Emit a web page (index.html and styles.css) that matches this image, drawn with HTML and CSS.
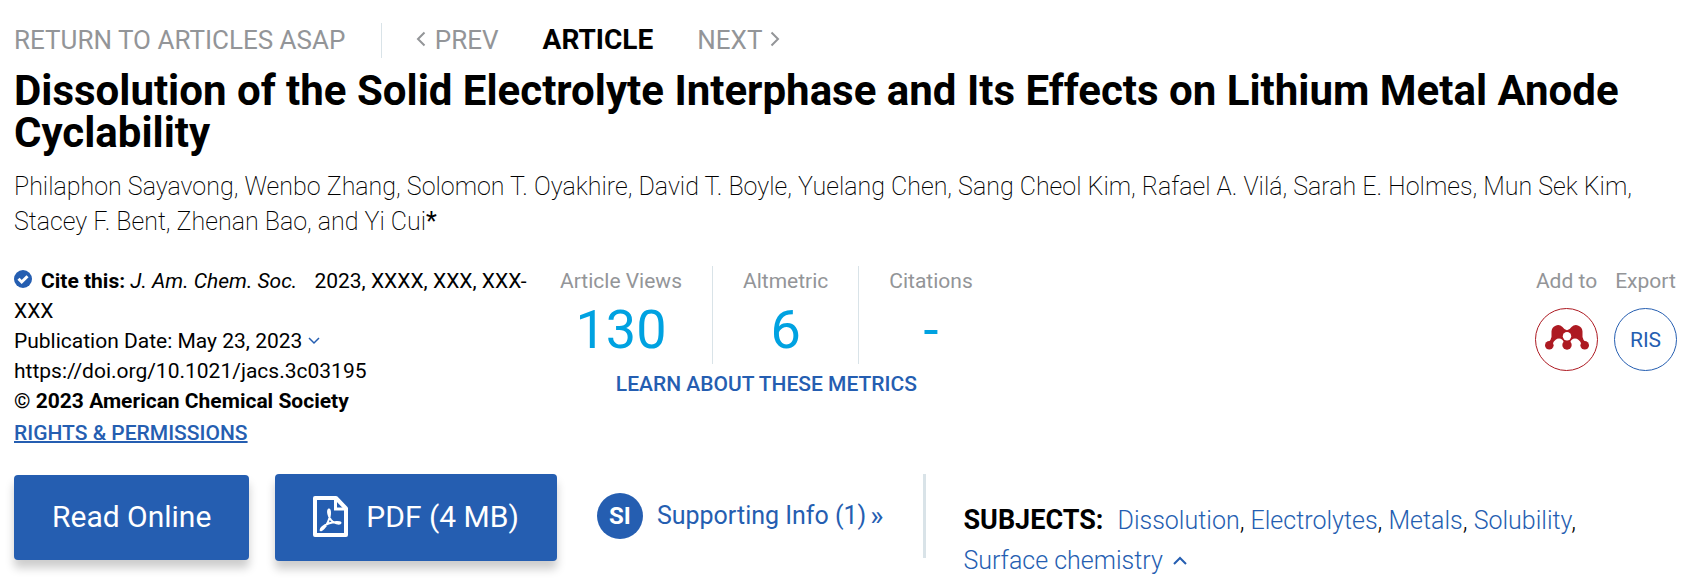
FILE: index.html
```html
<!DOCTYPE html>
<html lang="en">
<head>
    <meta charset="UTF-8">
    <meta name="viewport" content="width=device-width, initial-scale=1.0">
    <title>Dissolution of the Solid Electrolyte Interphase</title>
    <link rel="stylesheet" href="styles.css">
</head>
<body>
    <nav class="article-nav">
        <a class="nav-return" href="#">RETURN TO ARTICLES ASAP</a>
        <a class="nav-prev" href="#">
            <svg width="10" height="16" viewBox="0 0 10 16"><path d="M8.5 1.5 2 8l6.5 6.5"/></svg>
            PREV
        </a>
        <strong class="nav-current">ARTICLE</strong>
        <a class="nav-next" href="#">
            NEXT
            <svg width="10" height="16" viewBox="0 0 10 16"><path d="M1.5 1.5 8 8l-6.5 6.5"/></svg>
        </a>
    </nav>

    <h1 class="title">Dissolution of the Solid Electrolyte Interphase and Its Effects on Lithium Metal Anode Cyclability</h1>

    <p class="authors">Philaphon Sayavong, Wenbo Zhang, Solomon T. Oyakhire, David T. Boyle, Yuelang Chen, Sang Cheol Kim, Rafael A. Vilá, Sarah E. Holmes, Mun Sek Kim, Stacey F. Bent, Zhenan Bao, and Yi Cui<span class="star">*</span></p>

    <div class="details">
        <div class="citation">
            <div><svg class="check" width="18" height="18" viewBox="0 0 18 18"><circle cx="9" cy="9" r="9"/><path d="m4.5 8.8 3.2 3.2 5.8-5.8"/></svg><b>Cite this:</b> <i>J. Am. Chem. Soc.</i> <span class="volume">2023, XXXX, XXX, XXX-XXX</span></div>
            <div>Publication Date: May 23, 2023 <svg class="chevron" width="12" height="8" viewBox="0 0 12 8"><path d="m1 1 5 5 5-5"/></svg></div>
            <div>https://doi.org/10.1021/jacs.3c03195</div>
            <div><b>© 2023 American Chemical Society</b></div>
            <a class="rights" href="#">RIGHTS &amp; PERMISSIONS</a>
        </div>

        <div class="metrics">
            <div class="metrics-row">
                <div class="metric">
                    <span>Article Views</span>
                    <span class="value">130</span>
                </div>
                <div class="metric">
                    <span>Altmetric</span>
                    <span class="value">6</span>
                </div>
                <div class="metric">
                    <span>Citations</span>
                    <span class="value">-</span>
                </div>
            </div>
            <a class="learn" href="#">LEARN ABOUT THESE METRICS</a>
        </div>

        <div class="tools">
            <div class="tool">
                <span>Add to</span>
                <a class="circle mendeley" href="#" aria-label="Mendeley">
                    <svg width="44" height="30" viewBox="0 0 44 30">
                        <path class="fill" d="M6.500 6.500V12Q6 15 3.500 17L7.500 19Q10 13.500 14 13.500 18 13.500 19 18H25Q26 13.500 30 13.500 34 13.500 36.500 19L40.500 17Q38 15 37.500 12V6.500A6.500 6.500 0 0 0 26.500 2Q22 8.500 17.500 2A6.500 6.500 0 0 0 6.500 6.500Z"/>
                        <circle cx="22" cy="20" r="4.7"/>
                        <circle class="hole" cx="22" cy="11.3" r="4.2"/>
                        <circle cx="4.3" cy="20.200" r="4.3"/>
                        <circle cx="39.700" cy="20.200" r="4.3"/>
                    </svg>
                </a>
            </div>
            <div class="tool">
                <span>Export</span>
                <button class="circle ris">RIS</button>
            </div>
        </div>
    </div>

    <div class="actions">
        <button class="btn">Read Online</button>
        <button class="btn btn-pdf">
            <svg width="35" height="41" viewBox="0 0 35 41">
                <path d="M2 2H23L33 12.500V39H2Z" stroke-width="4" stroke-linejoin="round"/>
                <path d="M22.500 2V13H33" stroke-width="3"/>
                <path d="M16 13.500c-2 1-.5 7 2 10.500s9 4.500 9.500 3-7-1.500-12 .5-8.500 5-8 6.500 5-2.500 7.500-8 2.500-12 1-12.500Z" stroke-width="2"/>
            </svg>
            PDF (4 MB)
        </button>
        <a class="supporting" href="#"><span class="si">SI</span>Supporting Info (1)<span class="more">»</span></a>
        <div class="subjects">
            <b>SUBJECTS:</b>
            <a href="#">Dissolution</a>,
            <a href="#">Electrolytes</a>,
            <a href="#">Metals</a>,
            <a href="#">Solubility</a>,
            <a href="#">Surface chemistry</a>
            <svg class="chevron-up" width="14" height="10" viewBox="0 0 14 10"><path d="m1 8 6-6 6 6"/></svg>
        </div>
    </div>
</body>
</html>
```
FILE: styles.css
```css
body {
    margin: 0;
    padding: 22px 15px 0 14px;
    font-family: Roboto, sans-serif;
    font-size: 21px;
    line-height: 30px;
    color: #000;
    background-color: #fff;
}
a {
    color: #255eb1;
    text-decoration: none;
}
svg {
    fill: none;
    stroke: currentColor;
}
button {
    font-family: inherit;
    cursor: pointer;
}
b, strong {
    font-weight: 700;
}
.article-nav {
    display: flex;
    align-items: baseline;
    height: 35px;
    font-size: 26px;
    line-height: 35px;
    color: #939598;
}
.article-nav a {
    color: #939598;
}
.article-nav svg {
    stroke-width: 2;
    vertical-align: 2px;
}
.nav-return {
    padding-right: 36px;
    margin-right: 34px;
    border-right: 1px solid #d9e3e8;
}
.nav-prev svg {
    margin-right: 2px;
}
.nav-next svg {
    margin-left: 2px;
}
.nav-current {
    margin: 0 44px;
    color: #000;
    font-size: 28px;
}
.title {
    margin: 13px 0 0;
    font-size: 42px;
    line-height: 42px;
    font-weight: 700;
}
.authors {
    margin: 15px 0 0;
    padding-right: 20px;
    font-size: 25px;
    line-height: 35px;
    font-weight: 200;
}
.star {
    font-weight: 400;
}
.details {
    display: flex;
    margin-top: 27px;
}
.citation {
    flex: 0 0 520px;
    margin-right: 26px;
}
.check {
    margin-right: 9px;
}
.check circle {
    fill: #255eb1;
    stroke: none;
}
.check path {
    stroke: #fff;
    stroke-width: 3;
}
.volume {
    margin-left: 12px;
}
.chevron, .chevron-up {
    color: #255eb1;
    stroke-width: 1.5;
    vertical-align: 3px;
}
.chevron-up {
    margin-left: 4px;
    stroke-width: 2;
}
.rights {
    display: inline-block;
    margin-top: 2px;
    font-weight: 500;
    text-decoration: underline;
    text-decoration-thickness: 2px;
}
.metrics {
    text-align: center;
}
.metrics-row {
    display: flex;
    color: #939598;
}
.metric {
    display: flex;
    flex-direction: column;
    height: 98px;
    padding: 0 30px;
    border-right: 1px solid #d9e3e8;
}
.metric:first-child {
    padding-left: 0;
}
.metric:last-child {
    padding-right: 0;
    border-right: none;
}
.value {
    font-size: 54px;
    line-height: 68px;
    color: #00a2e1;
}
.learn {
    display: block;
    margin-top: 5px;
    font-weight: 500;
}
.tools {
    display: flex;
    gap: 16px;
    margin-left: auto;
    color: #939598;
}
.tool {
    display: flex;
    flex-direction: column;
    align-items: center;
    gap: 12px;
}
.circle {
    box-sizing: border-box;
    display: flex;
    align-items: center;
    justify-content: center;
    width: 63px;
    height: 63px;
    padding: 0;
    border: 1px solid;
    border-radius: 50%;
    background: none;
}
.ris {
    font-size: 21px;
    color: #255eb1;
}
.mendeley {
    color: #ad1a22;
}
.mendeley circle, .mendeley .fill {
    fill: currentColor;
    stroke: none;
}
.mendeley .hole {
    fill: #fff;
}
.actions {
    display: flex;
    align-items: flex-start;
    margin-top: 26px;
}
.btn {
    display: flex;
    align-items: center;
    height: 85px;
    margin: 1px 26px 0 0;
    padding: 0 38px 2px;
    border: none;
    border-radius: 4px;
    background-color: #255eb1;
    box-shadow: 0 8px 10px rgba(0, 0, 0, 0.2);
    color: #fff;
    font-size: 30px;
}
.btn-pdf {
    gap: 18px;
    height: 87px;
    margin: 0 40px 0 0;
}
.supporting {
    display: flex;
    align-items: center;
    height: 84px;
    padding-right: 40px;
    border-right: 3px solid #d9e3e8;
    font-size: 25px;
}
.si {
    width: 46px;
    margin-right: 14px;
    border-radius: 50%;
    background-color: #255eb1;
    color: #fff;
    font-size: 24px;
    line-height: 46px;
    font-weight: 700;
    text-align: center;
}
.more {
    margin-left: 4px;
    font-size: 28px;
}
.subjects {
    flex: 1;
    padding: 26px 80px 0 37px;
    font-size: 25px;
    line-height: 40px;
    font-weight: 300;
}
.subjects b {
    margin-right: 8px;
    font-size: 27px;
}
```
